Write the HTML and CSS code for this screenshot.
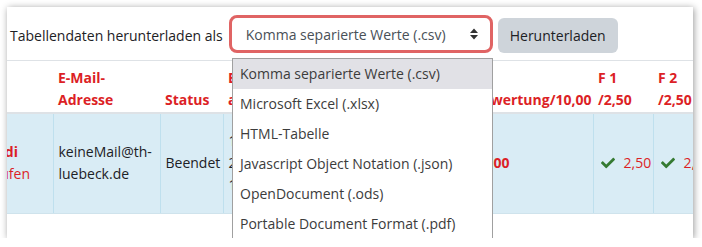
FILE: index.html
```html
<!DOCTYPE html>
<html lang="de">
<head>
    <meta charset="UTF-8">
    <title>Versuche - Bewertungen</title>
    <link rel="stylesheet" href="styles.css">
</head>
<body>

    <div class="card">
        <form class="download-bar">
            <label for="format">Tabellendaten herunterladen als</label>
            <div class="select-box">
                <span class="select-value">Komma separierte Werte (.csv)</span>
                <svg class="select-arrow" width="8" height="12" viewBox="0 0 8 12">
                    <path d="M4 0.5 L8 5 H0 Z M4 11.5 L8 7 H0 Z" fill="#333"/>
                </svg>
            </div>
            <button type="button" class="download-btn">Herunterladen</button>
        </form>

        <!-- Open option list of the select -->
        <ul class="select-list">
            <li class="active">Komma separierte Werte (.csv)</li>
            <li>Microsoft Excel (.xlsx)</li>
            <li>HTML-Tabelle</li>
            <li>Javascript Object Notation (.json)</li>
            <li>OpenDocument (.ods)</li>
            <li>Portable Document Format (.pdf)</li>
        </ul>

        <table class="attempts">
            <colgroup>
                <col class="c-name">
                <col class="c-mail">
                <col class="c-state">
                <col class="c-start">
                <col class="c-end">
                <col class="c-time">
                <col class="c-grade">
                <col class="c-q">
                <col class="c-q">
                <col class="c-q">
            </colgroup>
            <thead>
                <tr>
                    <th></th>
                    <th><a href="#">E-Mail-Adresse</a></th>
                    <th><a href="#">Status</a></th>
                    <th><a href="#">Begonnen am</a></th>
                    <th><a href="#">Beendet</a></th>
                    <th><a href="#">Dauer</a></th>
                    <th class="grade"><a href="#">Bewertung/10,00</a></th>
                    <th><a href="#">F 1<br>/2,50</a></th>
                    <th><a href="#">F 2<br>/2,50</a></th>
                    <th><a href="#">F 3<br>/2,50</a></th>
                </tr>
            </thead>
            <tbody>
                <tr>
                    <td><a href="#" class="bold">Andi</a><br><a href="#">prüfen</a></td>
                    <td>keineMail@th-luebeck.de</td>
                    <td>Beendet</td>
                    <td>14. Juni<br>2023<br>10:25</td>
                    <td>14. Juni 2023 10:40</td>
                    <td>15 Min.</td>
                    <td><a href="#" class="bold">10,00</a></td>
                    <td class="mark"><span class="check"><svg width="14" height="14" viewBox="0 0 512 512"><path fill="#357a32" d="M173.9 439.4l-166.4-166.4c-10-10-10-26.2 0-36.2l36.2-36.2c10-10 26.2-10 36.2 0L192 312.7 432.1 72.6c10-10 26.2-10 36.2 0l36.2 36.2c10 10 10 26.2 0 36.2l-294.4 294.4c-10 10-26.2 10-36.2 0z"/></svg></span><a href="#">2,50</a></td>
                    <td class="mark"><span class="check"><svg width="14" height="14" viewBox="0 0 512 512"><path fill="#357a32" d="M173.9 439.4l-166.4-166.4c-10-10-10-26.2 0-36.2l36.2-36.2c10-10 26.2-10 36.2 0L192 312.7 432.1 72.6c10-10 26.2-10 36.2 0l36.2 36.2c10 10 10 26.2 0 36.2l-294.4 294.4c-10 10-26.2 10-36.2 0z"/></svg></span><a href="#">2,50</a></td>
                    <td class="mark"><span class="check"><svg width="14" height="14" viewBox="0 0 512 512"><path fill="#357a32" d="M173.9 439.4l-166.4-166.4c-10-10-10-26.2 0-36.2l36.2-36.2c10-10 26.2-10 36.2 0L192 312.7 432.1 72.6c10-10 26.2-10 36.2 0l36.2 36.2c10 10 10 26.2 0 36.2l-294.4 294.4c-10 10-26.2 10-36.2 0z"/></svg></span><a href="#">2,50</a></td>
                </tr>
            </tbody>
        </table>
    </div>

</body>
</html>
```

FILE: styles.css
```css
body {
    margin: 0;
    background-color: #fff;
    font-family: "Open Sans", Arial, sans-serif;
    font-size: 14px;
    color: #1d2125;
}
.card {
    position: relative;
    margin: 7px 0 0 7px;
    width: 686px;
    height: 231px;
    overflow: hidden;
    background-color: #fff;
    box-shadow: 1px 1px 7px rgba(0, 0, 0, 0.4);
}
.download-bar {
    display: flex;
    align-items: flex-start;
    height: 54px;
    padding-left: 3px;
    border-bottom: 1px solid #dee2e6;
    box-sizing: border-box;
}
.download-bar label {
    margin-top: 19px;
    margin-right: 6px;
}
.select-box {
    display: flex;
    align-items: center;
    justify-content: space-between;
    box-sizing: border-box;
    width: 264px;
    height: 38px;
    margin-top: 8px;
    padding: 0 12px 0 14px;
    border: 3px solid #e06464;
    border-radius: 8px;
    color: #495057;
}
.select-arrow {
    display: block;
}
.download-btn {
    margin: 11px 0 0 5px;
    width: 120px;
    height: 35px;
    border: none;
    border-radius: 6px;
    background-color: #ced4da;
    color: #1d2125;
    font-family: inherit;
    font-size: 14px;
}
.select-list {
    position: absolute;
    top: 51px;
    left: 225px;
    width: 259px;
    margin: 0;
    padding: 0;
    list-style: none;
    background-color: #fff;
    border: 1px solid #a0a0a0;
    color: #3c3c3c;
    z-index: 2;
}
.select-list li {
    height: 30px;
    line-height: 30px;
    padding-left: 7px;
    white-space: nowrap;
}
.select-list li.active {
    background-color: #e1e1e6;
}
.attempts {
    margin-left: -26px;
    border-collapse: collapse;
    table-layout: fixed;
    width: 792px;
    line-height: 22px;
}
.c-name { width: 72px; }
.c-mail { width: 107px; }
.c-state { width: 63px; }
.c-start { width: 97px; }
.c-end { width: 80px; }
.c-time { width: 68px; }
.c-grade { width: 125px; }
.c-q { width: 60px; }
.attempts th {
    text-align: left;
    vertical-align: bottom;
    padding: 6px 5px 1px 5px;
    border-bottom: 2px solid #dee2e6;
    font-weight: bold;
}
.attempts th.grade {
    text-align: right;
    white-space: nowrap;
    padding-right: 3px;
}
.attempts td {
    vertical-align: middle;
    padding: 16px 5px 17px 5px;
    background-color: #d9ecf5;
    border-left: 1px solid #bfe0ee;
    border-bottom: 1px solid #cfe3ec;
}
.attempts td:first-child {
    border-left: none;
}
.attempts td.mark {
    white-space: nowrap;
}
.attempts a {
    color: #dc1f26;
    text-decoration: none;
}
.attempts a.bold {
    font-weight: bold;
}
.check {
    display: inline-block;
    vertical-align: -2px;
    margin: 0 9px 0 2px;
}
.check svg {
    display: block;
}
```
